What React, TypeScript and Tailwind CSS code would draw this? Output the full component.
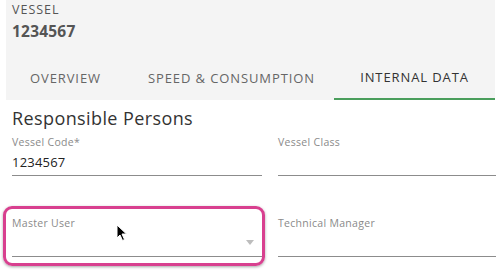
import React from "react";

const font = { fontFamily: '"Open Sans", "Liberation Sans", sans-serif' };

function Field({ label, value, children }: { label: string; value?: string; children?: React.ReactNode }) {
  return (
    <div className="relative flex flex-col h-[40px]">
      <div className="text-[10.5px] leading-[12px] tracking-[0.3px] text-[#8a8a8a]">{label}</div>
      <div className="flex-1 flex items-end pb-[5px] text-[13px] leading-[16px] tracking-[0.2px] text-[#222]">{value}</div>
      <div className="h-px bg-[#8c8c8c]" />
      {children}
    </div>
  );
}

export default function App() {
  return (
    <div className="w-[496px] h-[272px] bg-white overflow-hidden relative" style={font}>
      <div className="ml-[6px] mr-[1px] h-[100px] bg-[#f4f4f4] flex flex-col">
        <div className="pl-[6px] pt-[2px] text-[12.5px] leading-[16px] tracking-[1px] text-[#555]">VESSEL</div>
        <div className="pl-[6px] pt-[3px] text-[15.5px] leading-[20px] font-bold text-[#555] tracking-[0.2px]">1234567</div>
        <div className="mt-auto flex h-[42px] text-[13px] tracking-[0.9px]">
          <div className="pl-[24px] pr-[47px] flex items-center text-[#666]">OVERVIEW</div>
          <div className="pl-[0px] pr-[19px] flex items-center text-[#666]">SPEED &amp; CONSUMPTION</div>
          <div className="flex-1 flex items-center justify-center text-[#333] border-b-2 border-[#4a9e5c]">INTERNAL DATA</div>
        </div>
      </div>
      <div className="px-[12px]">
        <div className="pt-[6px] text-[18px] leading-[24px] tracking-[0.4px] text-[#333]">Responsible Persons</div>
        <div className="grid grid-cols-[250px_1fr] gap-x-[16px] mr-[-12px] mt-[6px]">
          <Field label="Vessel Code*" value="1234567" />
          <Field label="Vessel Class" />
        </div>
        <div className="grid grid-cols-[250px_1fr] gap-x-[16px] mr-[-12px] mt-[41px]">
          <Field label="Master User">
            <div className="absolute left-[-9px] right-[-3px] top-[-11px] bottom-[-9px] rounded-[9px] border-[3px] border-[#d8408f] shadow-[0_1px_3px_rgba(0,0,0,0.35)]" />
            <svg className="absolute right-[8px] bottom-[12px]" width="8" height="5" viewBox="0 0 8 5">
              <path d="M0 0 L8 0 L4 5 Z" fill="#bdbdbd" />
            </svg>
            <svg className="absolute left-[104px] top-[7px]" width="12" height="18" viewBox="0 0 12 18">
              <path d="M1 1 L1 14 L4 11 L6.5 16.5 L8.5 15.5 L6 10 L10.5 10 Z" fill="#000" stroke="#fff" strokeWidth="1" />
            </svg>
          </Field>
          <Field label="Technical Manager" />
        </div>
      </div>
    </div>
  );
}
